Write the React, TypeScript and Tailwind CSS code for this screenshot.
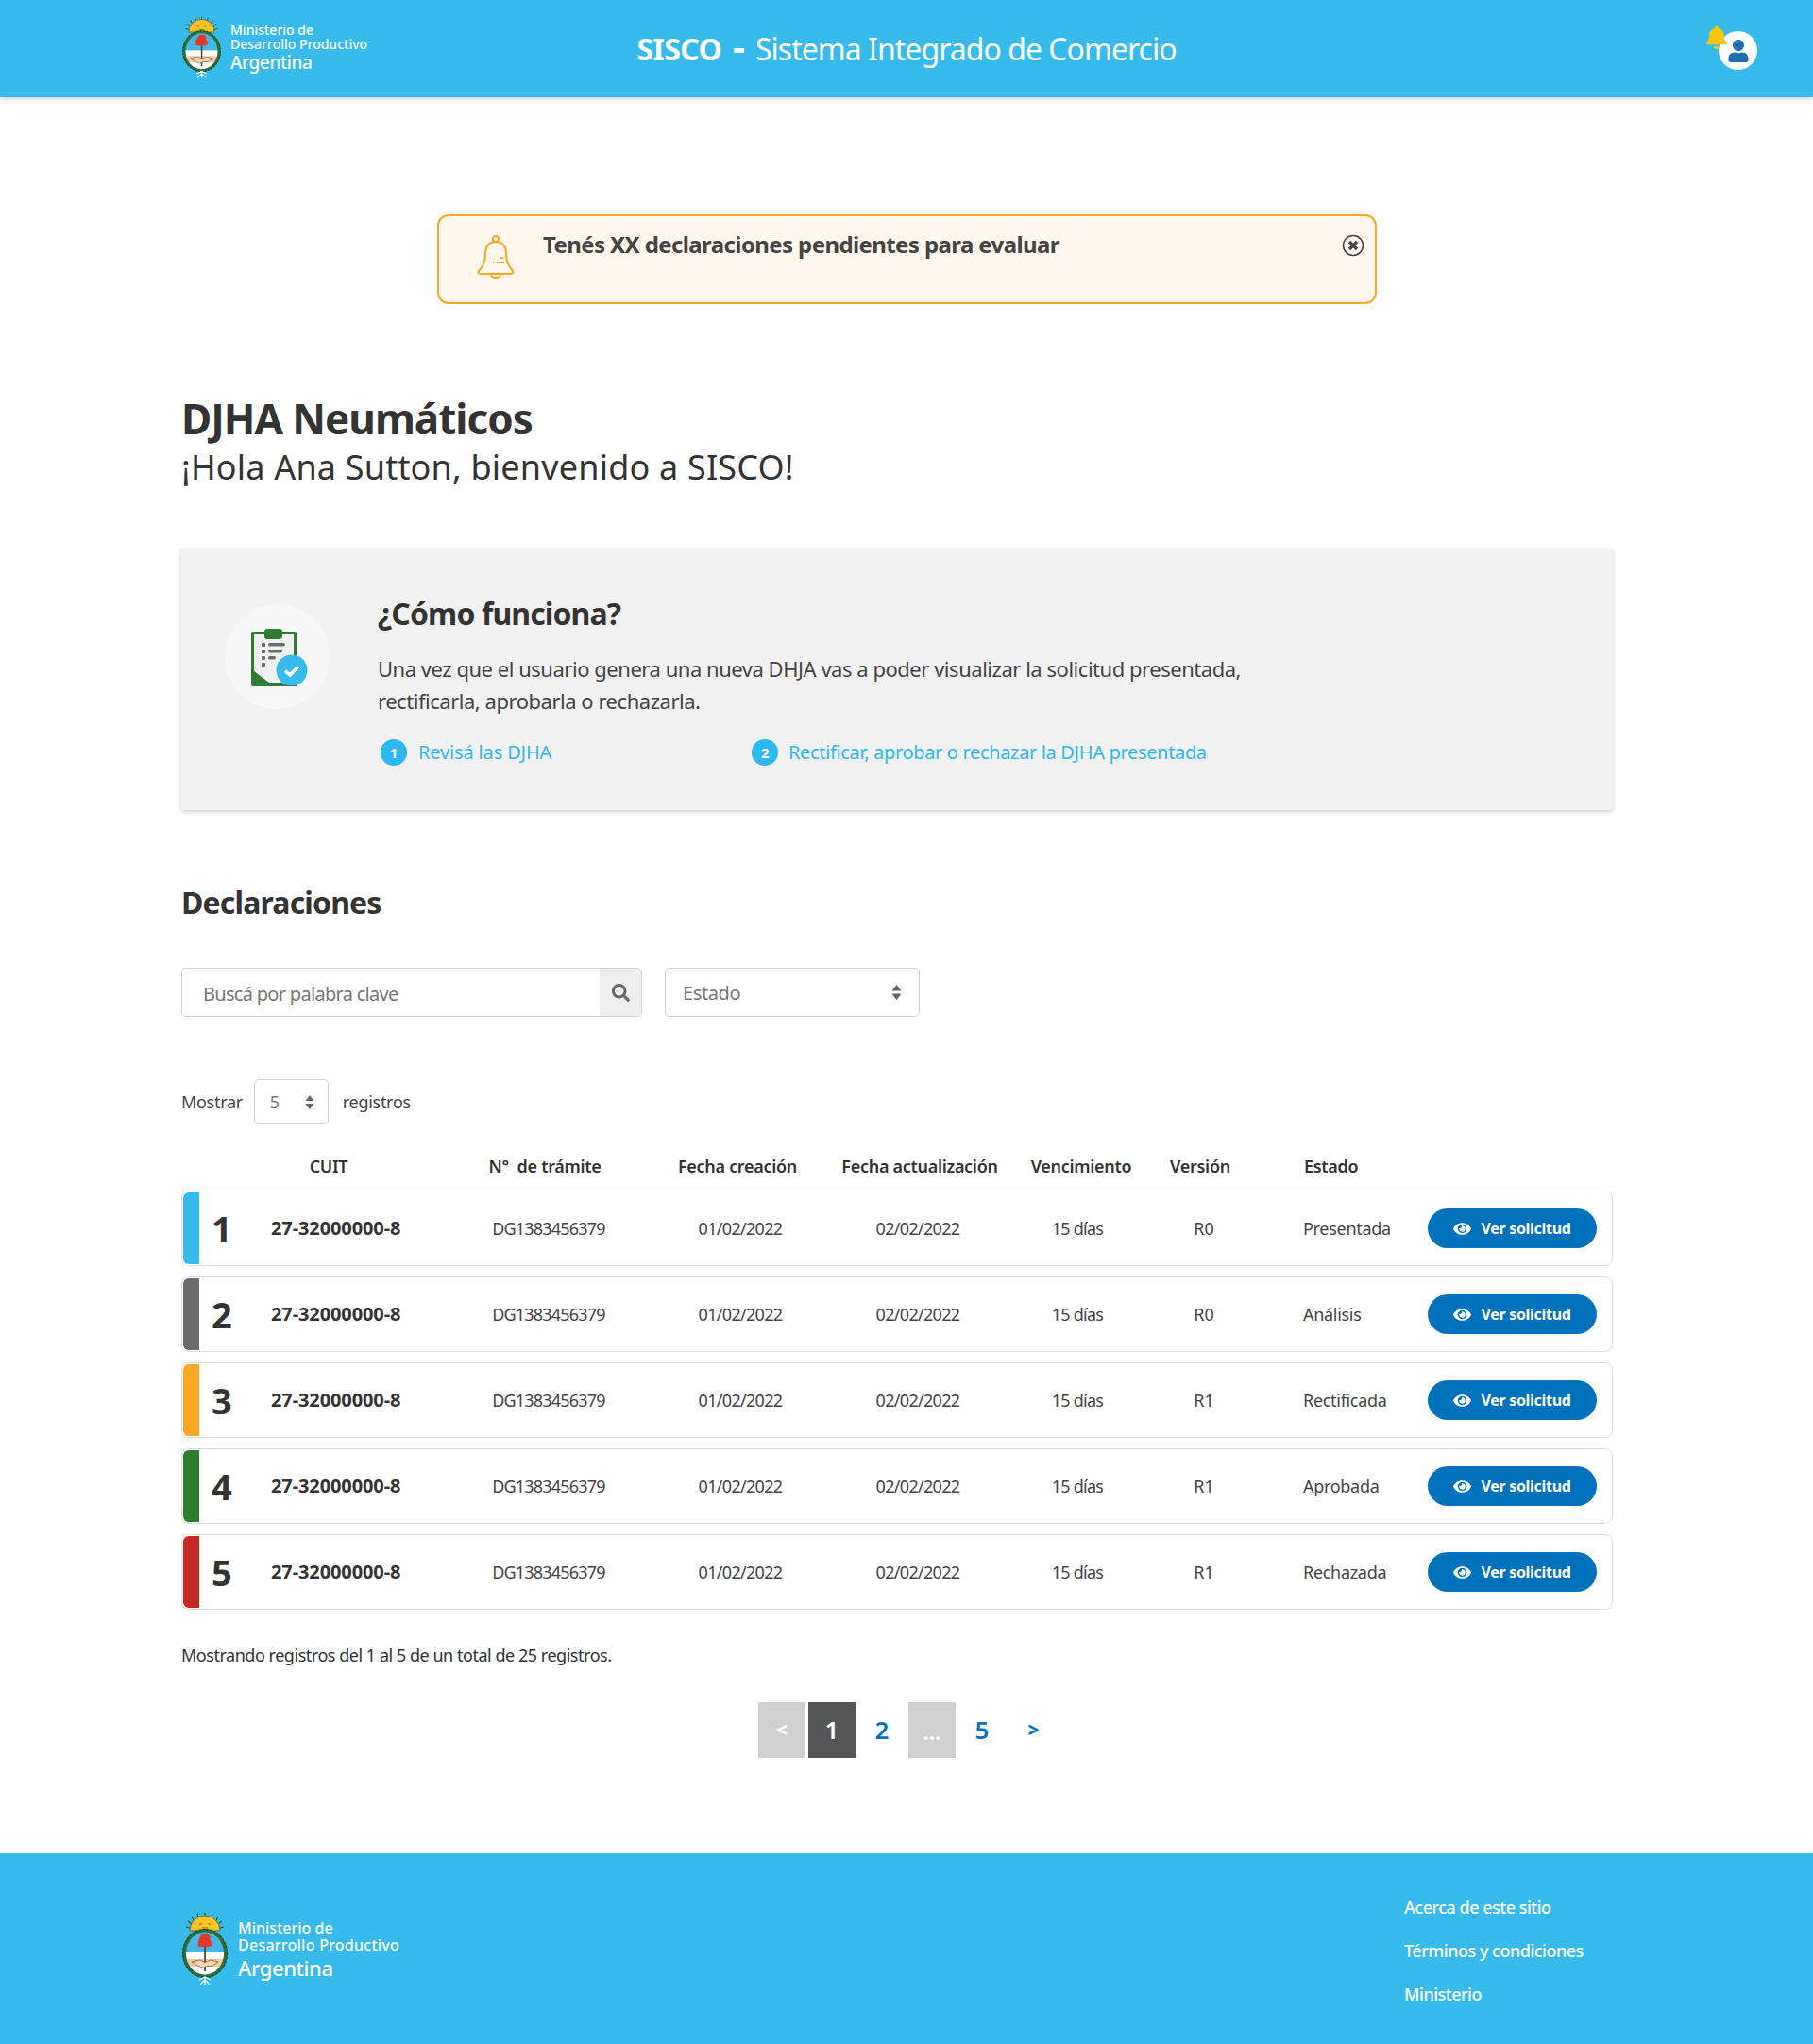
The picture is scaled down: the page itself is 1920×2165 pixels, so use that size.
import React from "react";
import { FaBell, FaEye, FaSearch, FaUser } from "react-icons/fa";

function Coat({ className, id }: { className: string; id: string }) {
  return (
    <svg viewBox="0 0 50 78" className={className}>
      <g stroke="#3d4a2a" strokeWidth="1.2">
        <path d="M25 1v4M17 2l1 4M33 2l-1 4M11 5l2 4M39 5l-2 4M7 10l4 3M43 10l-4 3M5 16l4 1M45 16l-4 1" />
      </g>
      <path d="M9 20a16 16 0 0 1 32 0z" fill="#f7c325" stroke="#5c5a22" strokeWidth="0.8" />
      <path d="M19 13h3M28 13h3M22 17h6" stroke="#8a6a10" strokeWidth="1" />
      <ellipse cx="25" cy="44" rx="24" ry="26" fill="#2c6e38" />
      <ellipse cx="25" cy="44" rx="23.4" ry="25.4" fill="none" stroke="#1c3f22" strokeWidth="1.2" strokeDasharray="2 2" />
      <ellipse cx="25" cy="44" rx="20" ry="22.5" fill="#45b6e8" />
      <clipPath id={id}>
        <ellipse cx="25" cy="44" rx="20" ry="22.5" />
      </clipPath>
      <g clipPath={`url(#${id})`}>
        <rect x="0" y="43" width="50" height="8" fill="#fff" />
        <rect x="0" y="50" width="50" height="8" fill="#f7c99c" />
        <rect x="0" y="58" width="50" height="10" fill="#fff" />
      </g>
      <rect x="24.2" y="36" width="1.8" height="27" fill="#5b4630" />
      <path d="M18 37c-1.4-8 2.6-14 8-14 4 0 5.6 4 4.4 6.4l2.8 3c0 3.6-3 4.6-6 4.6z" fill="#e5382b" />
      <path d="M11 53l9-2 5 2.6 6-2.6 8 2-6 4.4h-6l-4 2-5-2z" fill="#f8d7b0" stroke="#4b3b2a" strokeWidth="0.6" />
      <path d="M19 72l6-3 6 3M25 69v8M20 77l5-5 5 5" stroke="#ffffff" strokeWidth="1.2" fill="none" />
    </svg>
  );
}

function Arrows({ className }: { className: string }) {
  return (
    <svg viewBox="0 0 10 16" className={className} fill="#666">
      <path d="M5 0l5 6.5H0z" />
      <path d="M5 16l5-6.5H0z" />
    </svg>
  );
}

const rows = [
  { n: "1", c: "bg-[#37bbed]", v: "R0", e: "Presentada" },
  { n: "2", c: "bg-[#6d6d6d]", v: "R0", e: "Análisis" },
  { n: "3", c: "bg-[#f9a825]", v: "R1", e: "Rectificada" },
  { n: "4", c: "bg-[#2e7d32]", v: "R1", e: "Aprobada" },
  { n: "5", c: "bg-[#c62828]", v: "R1", e: "Rechazada" },
];

export default function App() {
  return (
    <div className="w-[1920px] h-[2165px] flex flex-col bg-white text-[#333] [font-family:'Noto_Sans',sans-serif]">
      <header className="relative z-10 h-[103px] shrink-0 bg-[#37bbed] shadow-[0_2px_6px_rgba(0,0,0,0.18)] pl-[192px] pr-[59px] flex items-center text-white">
        <div className="w-[300px] flex items-center gap-[9px]">
          <Coat id="coat-head" className="w-[43px] h-[66px] -mt-[3px]" />
          <div className="flex flex-col">
            <span className="text-[14px] leading-[15px] font-medium">Ministerio de</span>
            <span className="text-[14px] leading-[15px] font-medium whitespace-nowrap">Desarrollo Productivo</span>
            <span className="text-[19px] leading-[25px] font-medium tracking-[-0.4px]">Argentina</span>
          </div>
        </div>
        <div className="w-[936px] text-center text-[32px] leading-[40px] whitespace-nowrap tracking-[-0.97px]">
          <b className="font-bold tracking-[-0.6px]">
            SISCO <span className="ml-[4px] mr-[4px] text-[40px] leading-[32px]">-</span>{" "}
          </b>
          Sistema Integrado de Comercio
        </div>
        <div className="relative flex-1 h-[60px] flex justify-end items-center">
          <div className="w-[41px] h-[41px] mt-[4px] rounded-full bg-white flex items-center justify-center">
            <FaUser className="w-[24px] h-[24px] text-[#1a6fb5]" />
          </div>
          <FaBell className="absolute right-[31px] top-[5px] w-[24px] h-[25px] text-[#fbc60d]" />
        </div>
      </header>

      <main className="flex-1 pl-[192px] pr-[212px]">
        <div className="relative mt-[124px] ml-[271px] w-[995px] h-[95px] rounded-[12px] border-2 border-[#f9a825] bg-[#fff8ef] flex">
          <svg viewBox="0 0 40 46" className="w-[40px] h-[46px] ml-[40px] mt-[20px]" fill="none" stroke="#f9a825" strokeWidth="2">
            <circle cx="20" cy="4" r="3" />
            <path d="M20 7c-7 0-11 5-11 12 0 8-1 12-7 19-1 2 0 3 2 3h32c2 0 3-1 2-3-6-7-7-11-7-19 0-7-4-12-11-12z" />
            <path d="M15 41c0 3 2 4 5 4s5-1 5-4" />
            <path d="M21 29h8M25 24h3M17 29h1" />
          </svg>
          <div className="ml-[30px] mt-[14px] text-[24px] leading-[32px] font-bold text-[#444] tracking-[-0.6px]">Tenés XX declaraciones pendientes para evaluar</div>
          <svg viewBox="0 0 24 24" className="absolute right-[11px] top-[19px] w-[24px] h-[24px]" fill="none" stroke="#444">
            <circle cx="12" cy="12" r="10.5" strokeWidth="1.6" />
            <path d="M8 8l8 8M16 8l-8 8" strokeWidth="3.4" />
          </svg>
        </div>

        <h1 className="mt-[93px] text-[44px] leading-[56px] font-bold text-[#333] tracking-[-1px]">DJHA Neumáticos</h1>
        <p className="text-[36px] leading-[48px] text-[#333] tracking-[0.2px]">¡Hola Ana Sutton, bienvenido a SISCO!</p>

        <section className="mt-[62px] h-[277px] bg-[#f2f2f2] rounded-[2px] shadow-[0_2px_5px_rgba(0,0,0,0.2)] flex pl-[46px]">
          <div className="mt-[59px] w-[111px] h-[111px] rounded-full bg-[#f7f7f7] flex items-center justify-center shrink-0">
            <svg viewBox="0 0 66 62" className="w-[66px] h-[62px] ml-[4px]">
              <path d="M3 6a2 2 0 0 1 2-2h44a2 2 0 0 1 2 2v56H5a2 2 0 0 1-2-2z" fill="#2e7d32" />
              <path d="M6 7h42v51H22L6 46z" fill="#f1f1f1" />
              <rect x="17" y="1" width="19" height="11" rx="3" fill="#2e7d32" />
              <g fill="#6d6d6d">
                <rect x="14" y="16" width="4" height="4" rx="1" />
                <rect x="21" y="16" width="18" height="3.4" rx="1.7" />
                <rect x="14" y="23" width="4" height="4" rx="1" />
                <rect x="21" y="23" width="15" height="3.4" rx="1.7" />
                <rect x="14" y="30" width="4" height="4" rx="1" />
                <rect x="21" y="30" width="8" height="3.4" rx="1.7" />
                <rect x="14" y="37" width="4" height="4" rx="1" />
              </g>
              <circle cx="46" cy="45" r="16.5" fill="#37bbed" />
              <path d="M39 45.5l5 4.5 9-9" fill="none" stroke="#fff" strokeWidth="3.6" />
            </svg>
          </div>
          <div className="ml-[51px]">
            <h2 className="mt-[47px] text-[32px] leading-[44px] font-bold text-[#333] tracking-[-0.9px]">¿Cómo funciona?</h2>
            <p className="mt-[19px] w-[960px] text-[22px] leading-[34px] text-[#444] tracking-[-0.47px]">
              Una vez que el usuario genera una nueva DHJA vas a poder visualizar la solicitud presentada, rectificarla, aprobarla o rechazarla.
            </p>
            <div className="mt-[24px] flex text-[20px] leading-[28px] text-[#2db9ef] tracking-[-0.34px]">
              <div className="w-[396px] pl-[3px] flex items-center gap-[12px] tracking-[-0.15px]">
                <span className="w-[28px] h-[28px] rounded-full bg-[#2db9ef] text-white text-[15px] font-bold flex items-center justify-center">1</span>
                Revisá las DJHA
              </div>
              <div className="flex items-center gap-[11px]">
                <span className="w-[28px] h-[28px] rounded-full bg-[#2db9ef] text-white text-[15px] font-bold flex items-center justify-center">2</span>
                Rectificar, aprobar o rechazar la DJHA presentada
              </div>
            </div>
          </div>
        </section>

        <h2 className="mt-[76px] text-[32px] leading-[44px] font-bold text-[#333] tracking-[-0.85px]">Declaraciones</h2>

        <div className="mt-[47px] flex gap-[24px]">
          <div className="w-[488px] h-[52px] flex rounded-[5px] border border-[#ccd3da] overflow-hidden">
            <div className="flex-1 pl-[22px] pt-[3px] flex items-center text-[20px] text-[#777] tracking-[-0.7px]">Buscá por palabra clave</div>
            <div className="w-[44px] bg-[#eeeeee] flex items-center justify-center">
              <FaSearch className="w-[19px] h-[19px] text-[#666]" />
            </div>
          </div>
          <div className="w-[270px] h-[52px] rounded-[5px] border border-[#ccd3da] pl-[18px] pr-[18px] flex items-center justify-between text-[20px] text-[#777]">
            <span className="pt-[2px] tracking-[-0.4px]">Estado</span>
            <Arrows className="w-[11px] h-[16px]" />
          </div>
        </div>

        <div className="mt-[66px] h-[48px] flex items-center text-[18px] text-[#444] tracking-[-0.3px]">
          Mostrar
          <div className="ml-[12px] w-[79px] h-[48px] rounded-[5px] border border-[#ccd3da] pl-[16px] pr-[14px] flex items-center justify-between text-[#777]">
            5
            <Arrows className="w-[10px] h-[15px]" />
          </div>
          <span className="ml-[15px]">registros</span>
        </div>

        <div className="mt-[31px] grid grid-cols-[95px_200px_188px_218px_158px_180px_88px_193px_179px_17px] text-[18px] leading-[26px] font-semibold text-[#333] tracking-[-0.3px]">
          <div />
          <div className="text-center pr-[78px]">CUIT</div>
          <div className="text-center pr-[8px] whitespace-nowrap">N°&nbsp; de trámite</div>
          <div className="text-center pr-[6px] whitespace-nowrap">Fecha creación</div>
          <div className="flex justify-center pl-[4px] whitespace-nowrap">Fecha actualización</div>
          <div className="text-center pl-[8px]">Vencimiento</div>
          <div className="text-center pr-[8px]">Versión</div>
          <div className="pl-[62px]">Estado</div>
        </div>

        <div className="mt-[13px] flex flex-col gap-[11px]">
          {rows.map((r) => (
            <div key={r.n} className="h-[80px] rounded-[8px] border border-[#dddddd] grid grid-cols-[94px_200px_188px_218px_158px_180px_88px_193px_179px_16px] items-center text-[18px] text-[#444]">
              <div className="h-full flex items-center">
                <div className={`w-[17px] h-[76px] ml-[1px] rounded-l-[6px] ${r.c}`} />
                <span className="ml-[13px] text-[38px] font-bold text-[#333]">{r.n}</span>
              </div>
              <div className="text-[20px] font-bold text-[#333] whitespace-nowrap tracking-[-0.1px]">27-32000000-8</div>
              <div className="text-center tracking-[-0.8px]">DG1383456379</div>
              <div className="text-center tracking-[-0.7px]">01/02/2022</div>
              <div className="text-center tracking-[-0.7px]">02/02/2022</div>
              <div className="text-center tracking-[-0.75px]">15 días</div>
              <div className="text-center">{r.v}</div>
              <div className="pl-[61px] tracking-[-0.3px]">{r.e}</div>
              <div className="h-[42px] rounded-full bg-[#0072bb] text-white text-[16px] font-bold flex items-center justify-center gap-[10px] tracking-[-0.3px]">
                <FaEye className="w-[19px] h-[19px]" />
                Ver solicitud
              </div>
              <div />
            </div>
          ))}
        </div>

        <p className="mt-[35px] text-[18px] leading-[26px] text-[#333] tracking-[-0.47px]">Mostrando registros del 1 al 5 de un total de 25 registros.</p>

        <nav className="mt-[37px] ml-[611px] flex gap-[3px] font-semibold">
          <div className="w-[50px] h-[59px] bg-[#d0d0d0] text-white text-[21px] font-extrabold flex items-center justify-center">&lt;</div>
          <div className="w-[50px] h-[59px] bg-[#555555] text-white text-[26px] flex items-center justify-center">1</div>
          <div className="w-[50px] h-[59px] text-[#0072bb] text-[26px] flex items-center justify-center">2</div>
          <div className="w-[50px] h-[59px] bg-[#d0d0d0] text-white text-[22px] font-extrabold pt-[4px] flex items-center justify-center">...</div>
          <div className="w-[50px] h-[59px] text-[#0072bb] text-[26px] flex items-center justify-center">5</div>
          <div className="w-[50px] h-[59px] pl-[3px] text-[#0072bb] text-[21px] font-extrabold flex items-center justify-center">&gt;</div>
        </nav>
      </main>

      <footer className="h-[202px] shrink-0 bg-[#37bbed] text-white pl-[192px] flex justify-between">
        <div className="flex items-center gap-[10px]">
          <Coat id="coat-foot" className="w-[50px] h-[78px]" />
          <div className="flex flex-col pt-[4px]">
            <span className="text-[16px] leading-[18px] font-medium">Ministerio de</span>
            <span className="text-[16px] leading-[18px] font-medium tracking-[0.25px]">Desarrollo Productivo</span>
            <span className="text-[22px] leading-[30px] font-medium tracking-[-0.4px]">Argentina</span>
          </div>
        </div>
        <div className="w-[433px] pt-[44px] flex flex-col gap-[20px] text-[18px] leading-[26px] font-medium tracking-[-0.5px]">
          <span>Acerca de este sitio</span>
          <span>Términos y condiciones</span>
          <span>Ministerio</span>
        </div>
      </footer>
    </div>
  );
}
